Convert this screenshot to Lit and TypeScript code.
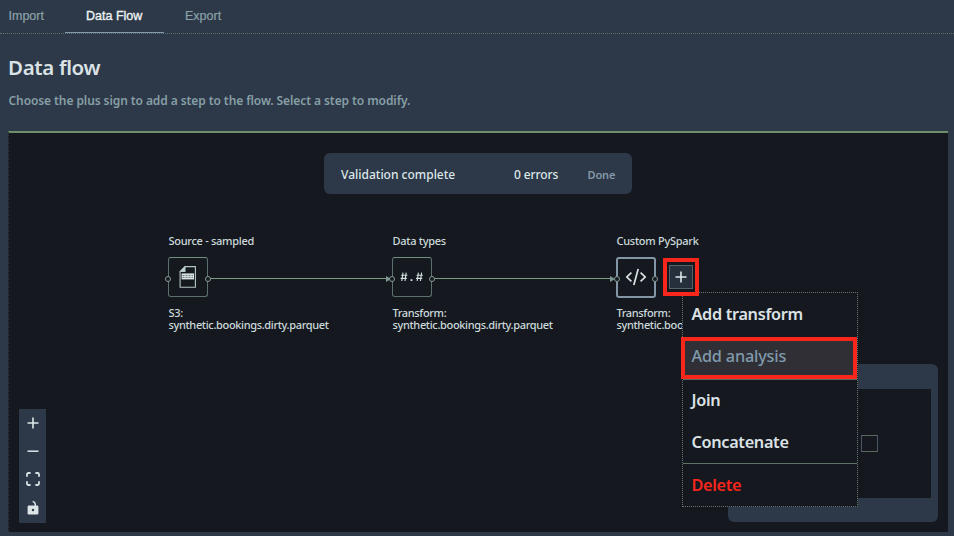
import { LitElement, html, css, svg, nothing } from "lit";
import { customElement, property } from "lit/decorators.js";
import { classMap } from "lit/directives/class-map.js";

type IconName = "file" | "types" | "code" | "plus" | "minus" | "fit" | "lock";

const icons: Record<IconName, unknown> = {
  file: html`<svg width="18" height="24" viewBox="0 0 18 24" fill="none" stroke="#b4c7c6" stroke-width="1.1">
    ${svg`<path d="M6 1.6H16.4V22.2H1.1V6.5Z"/><path d="M6 1.6V6.5H1.1" fill="#c3d3d4"/><rect x="2.6" y="8.4" width="12.4" height="6" fill="#dbe6e6" stroke="none"/><path d="M3.5 10.4H14M3.5 12.4H14" stroke="#4c5a5c" stroke-width=".8" stroke-dasharray="2 1"/>`}
  </svg>`,
  types: html`<svg width="26" height="14" viewBox="0 0 26 14" fill="none" stroke="#d5e3e4" stroke-width="1.1">
    ${svg`<path d="M4 2.6L2.8 11M7.2 2.6L6 11M2.2 5.2H8.4M1.6 8.4H7.8"/><path d="M19.4 2.6L18.2 11M22.6 2.6L21.4 11M17.6 5.2H23.8M17 8.4H23.2"/><path d="M11.6 9.2h1.8v1.8h-1.8z" fill="#d5e3e4" stroke="none"/>`}
  </svg>`,
  code: html`<svg width="22" height="18" viewBox="0 0 22 18" fill="none" stroke="#d9e4e6" stroke-width="1.7">
    ${svg`<path d="M6.4 4.6L1.8 9L6.4 13.4M15.6 4.6L20.2 9L15.6 13.4M13.2 1L8.8 17"/>`}
  </svg>`,
  plus: html`<svg width="12" height="12" viewBox="0 0 12 12" stroke="#dfe8e8" stroke-width="1.6">
    ${svg`<path d="M.5 6H11.5M6 .5V11.5"/>`}
  </svg>`,
  minus: html`<svg width="12" height="12" viewBox="0 0 12 12" stroke="#cfdde2" stroke-width="1.6">
    ${svg`<path d="M.5 6.2H11.5"/>`}
  </svg>`,
  fit: html`<svg width="14" height="14" viewBox="0 0 14 14" fill="none" stroke="#d6e2e4" stroke-width="1.8">
    ${svg`<path d="M1 4.8V2.4Q1 1 2.4 1H4.6M9.4 1H11.6Q13 1 13 2.4V4.8M13 9.2V11.6Q13 13 11.6 13H9.4M4.6 13H2.4Q1 13 1 11.6V9.2"/>`}
  </svg>`,
  lock: html`<svg width="12" height="16" viewBox="0 0 12 16" fill="none">
    ${svg`<path d="M5.6 1.5Q8.4 1.8 8.4 6" stroke="#d6e2e4" stroke-width="1.5"/><rect x=".6" y="5.6" width="10.8" height="9" rx="1.4" fill="#dde5e6"/><circle cx="6" cy="10" r="1.2" fill="#2d3848"/>`}
  </svg>`,
};

@customElement("flow-node")
class FlowNode extends LitElement {
  @property() heading = "";
  @property() kind = "";
  @property() icon: IconName = "file";
  @property({ type: Boolean }) selected = false;
  @property({ type: Boolean }) incoming = false;
  @property({ type: Boolean }) outgoing = false;

  static styles = css`
    :host { display: block; width: 224px; color: #ccdadb; font: 500 11px/12px "Noto Sans", sans-serif; letter-spacing: -.35px; white-space: nowrap; }
    .heading { height: 23px; line-height: 14px; letter-spacing: -.28px; padding-left: .5px; }
    .row { display: flex; align-items: center; height: 40px; }
    .box { box-sizing: border-box; position: relative; width: 40px; height: 40px; border: 1px solid #5d7070; border-top-color: #71917a; border-radius: 3px; display: grid; place-items: center; flex: none; }
    .box.selected { border: 2px solid #8296a6; height: 41px; }
    .box svg { display: block; }
    .port { position: absolute; box-sizing: border-box; width: 6px; height: 6px; border: 1px solid #849c94; border-radius: 50%; top: 18px; background: #15181f; }
    .in { left: -4px; }
    .out { right: -4px; }
    .selected .port { top: 17px; }
    .selected .in { left: -4px; }
    .selected .out { right: -4px; }
    .arrow { position: absolute; left: -7px; top: 18px; border-left: 5px solid #7f9696; border-top: 3px solid transparent; border-bottom: 3px solid transparent; }
    .selected .arrow { left: -8px; top: 17px; }
    .edge { height: 1px; flex: 1; margin: 3px 4px 0 3px; background: #7a9e80; }
    .detail { margin-top: 10px; padding-left: .5px; }
  `;

  render() {
    return html`
      <div class="heading">${this.heading}</div>
      <div class="row">
        <div class=${classMap({ box: true, selected: this.selected })}>
          ${icons[this.icon]}
          ${this.incoming ? html`<i class="arrow"></i>` : nothing}
          <i class="port in"></i><i class="port out"></i>
        </div>
        ${this.outgoing ? html`<div class="edge"></div>` : nothing}
      </div>
      <div class="detail">${this.kind}:<br />synthetic.bookings.dirty.parquet</div>
    `;
  }
}

@customElement("app-root")
class AppRoot extends LitElement {
  static styles = css`
    :host { display: block; width: 954px; height: 536px; background: #2d3848; overflow: hidden; font-family: "Noto Sans", sans-serif; color: #dbe2e5; white-space: nowrap; }
    * { box-sizing: border-box; }
    svg { display: block; }
    .tabs { display: flex; height: 34px; border-bottom: 1px dotted #61716f; font: 12.5px/32px "Liberation Sans", Arial, sans-serif; color: #8ba3a7; }
    .tab { height: 33px; }
    .tab:first-child { padding-left: 8.5px; width: 65px; }
    .tab:last-child { padding-left: 21px; }
    .tab:not(.active) { -webkit-text-stroke: .2px #8ba3a7; }
    .active { width: 99px; padding-left: 21px; border-bottom: 1px solid #829bab; color: #eef3f3; -webkit-text-stroke: .35px #eef3f3; }
    .head { height: 97px; padding: 19px 0 0 8px; }
    h1 { margin: 0; font-size: 20.5px; line-height: 28px; font-weight: 600; letter-spacing: -.35px; }
    .hint { margin: 11px 0 0; padding-left: .5px; font-size: 12px; line-height: 18px; font-weight: 600; letter-spacing: -.085px; color: #869fa5; }
    .canvas { position: relative; margin-left: 8px; width: 940px; height: 401px; background: #15181f; border-top: 2px solid #6d8d6b; border-left: 1px dotted #303b48; }
    .stage { padding-top: 20px; height: 399px; }
    .toast { margin-left: 315px; width: 308px; height: 41px; border-radius: 6px; background: #2d3848; display: flex; align-items: center; font-size: 12px; font-weight: 500; color: #dce7e8; padding-top: 1px; }
    .msg { width: 190px; padding-left: 17px; }
    .errors { width: 73.5px; letter-spacing: -.1px; }
    .done { font-size: 11px; font-weight: 600; letter-spacing: -.15px; color: #8499a8; }
    .nodes { display: flex; margin: 40px 0 0 159px; }
    .add { position: absolute; left: 654px; top: 125px; width: 36px; height: 38px; border: 4px solid #f8261b; background: #15181f; display: grid; place-items: center; }
    .plus { width: 24px; height: 24px; background: #262f3c; border: 1px solid #536367; display: grid; place-items: center; }
    .tools { position: absolute; left: 10px; top: 276px; width: 27px; height: 114px; padding-bottom: 1px; background: #2d3848; display: grid; grid-template-rows: repeat(4, 28.2px); place-items: center; }
    .map { position: absolute; left: 719px; top: 231px; width: 210px; height: 158px; background: #2d3848; border-radius: 6px; padding: 25px 7px 24px; }
    .view { height: 109px; background: #15181f; padding: 46px 0 0 126px; }
    .mini { width: 17px; height: 17px; border: 1px solid #59695f; border-left-color: #465567; border-right-color: #465567; }
    .menu { position: absolute; left: 673px; top: 159px; width: 176px; height: 215px; background: #15181f; border: 1px dotted #65756f; font-size: 16.3px; font-weight: 600; letter-spacing: -.33px; }
    .item { height: 42px; padding-left: 8.5px; line-height: 42px; }
    .item.hot { position: relative; left: -2px; width: 176px; margin: 2px 0 0; padding-left: 6.5px; line-height: 31px; border: 4px solid #f8261b; background: #302f35; color: #7f9aac; font-weight: 500; letter-spacing: -.2px; }
    .hot + .item { border-top: 1px solid #59695f; line-height: 41px; }
    .danger { border-top: 1px solid #5f7463; color: #f8261b; }
  `;

  render() {
    return html`
      <nav class="tabs"><div class="tab">Import</div><div class="tab active">Data Flow</div><div class="tab">Export</div></nav>
      <header class="head">
        <h1>Data flow</h1>
        <p class="hint">Choose the plus sign to add a step to the flow. Select a step to modify.</p>
      </header>
      <main class="canvas">
        <div class="stage">
          <div class="toast"><span class="msg">Validation complete</span><span class="errors">0 errors</span><span class="done">Done</span></div>
          <div class="nodes">
            <flow-node heading="Source - sampled" kind="S3" icon="file" outgoing></flow-node>
            <flow-node heading="Data types" kind="Transform" icon="types" incoming outgoing></flow-node>
            <flow-node heading="Custom PySpark" kind="Transform" icon="code" incoming selected></flow-node>
          </div>
        </div>
        <div class="tools">${icons.plus}${icons.minus}${icons.fit}${icons.lock}</div>
        <div class="map"><div class="view"><div class="mini"></div></div></div>
        <div class="menu">
          <div class="item">Add transform</div>
          <div class="item hot">Add analysis</div>
          <div class="item">Join</div>
          <div class="item">Concatenate</div>
          <div class="item danger">Delete</div>
        </div>
        <div class="add"><div class="plus">${icons.plus}</div></div>
      </main>
    `;
  }
}
